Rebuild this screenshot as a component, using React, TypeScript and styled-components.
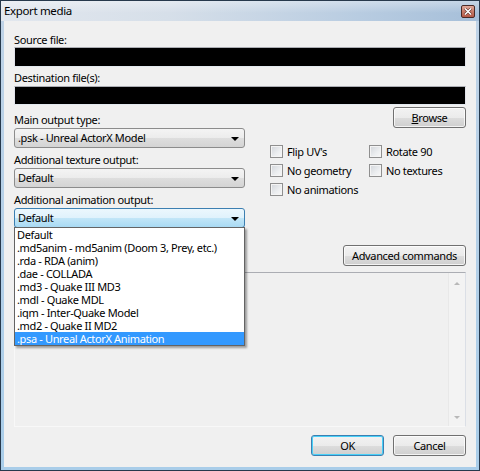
import React from 'react';
import styled, { createGlobalStyle, css } from 'styled-components';

const Global = createGlobalStyle`
  html, body { margin: 0; padding: 0; background: #ffffff; }
  body {
    font-family: "Noto Sans", "Open Sans", sans-serif;
    font-size: 11px;
    letter-spacing: -0.35px;
    color: #000;
  }
  * { box-sizing: border-box; }
`;

const Window = styled.div`
  width: 480px;
  height: 471px;
  display: flex;
  flex-direction: column;
  border: 1px solid #27394c;
  background: #bcd2e8;
`;

const TitleBar = styled.div`
  height: 20px;
  flex: none;
  display: flex;
  align-items: center;
  justify-content: space-between;
  padding: 0 4px 0 3px;
  background:
    linear-gradient(to bottom, rgba(255,255,255,0.35), rgba(255,255,255,0) 60%),
    linear-gradient(to right, #e2e7ee 0%, #d6dfe9 35%, #b8cce1 75%, #a6bfd9 100%);
`;

const Title = styled.span`
  font-size: 11.5px;
  line-height: 20px;
  color: #000;
`;

const CloseBtn = styled.div`
  width: 14px;
  height: 13px;
  border: 1px solid #4a2a26;
  border-radius: 2px;
  background: linear-gradient(to bottom, #e0aa9c 0%, #c77a68 50%, #b65a48 100%);
  display: flex;
  align-items: center;
  justify-content: center;
  margin-top: 1px;
`;

const Frame = styled.div`
  flex: 1;
  display: flex;
  padding: 0 3px 3px 3px;
  background: linear-gradient(to bottom, #bfd3e7, #a9cde9);
`;

const Client = styled.div`
  flex: 1;
  display: flex;
  flex-direction: column;
  background: #f0f0f0;
  padding: 12px 10px 11px 10px;
`;

const Label = styled.div<{ $mt?: number }>`
  line-height: 14px;
  height: 14px;
  margin-top: ${p => p.$mt ?? 0}px;
  white-space: nowrap;
`;

const TextBox = styled.div<{ $h: number; $mt?: number }>`
  height: ${p => p.$h}px;
  margin-top: ${p => p.$mt ?? 0}px;
  background: #000;
  border: 1px solid;
  border-color: #abadb3 #e2e3ea #e3e9ef #e2e3ea;
`;

const Columns = styled.div`
  display: flex;
  margin-top: 2px;
`;

const LeftCol = styled.div`
  width: 231px;
  flex: none;
  display: flex;
  flex-direction: column;
  padding-top: 6px;
`;

const RightCol = styled.div`
  flex: 1;
  display: flex;
  flex-direction: column;
  align-items: flex-end;
`;

const ComboWrap = styled.div`
  position: relative;
  margin-top: 1px;
`;

const Combo = styled.div<{ $focused?: boolean }>`
  height: 20px;
  display: flex;
  align-items: center;
  justify-content: space-between;
  padding: 0 5px 0 3px;
  border: 1px solid #8c8c8c;
  border-radius: 3px;
  line-height: 18px;
  background: linear-gradient(to bottom, #f4f4f4 0%, #ececec 50%, #dedede 51%, #d4d4d4 100%);
  ${p => p.$focused && css`
    border-color: #3c7fb1;
    background: linear-gradient(to bottom, #ecf7fd 0%, #dff2fc 50%, #c2e6f8 51%, #a9daf3 100%);
  `}
`;

const Arrow = styled.span`
  width: 0;
  height: 0;
  border-left: 4px solid transparent;
  border-right: 4px solid transparent;
  border-top: 4px solid #000;
  margin-top: 1px;
`;

const DropList = styled.ul`
  position: absolute;
  top: 19px;
  left: 0;
  width: 231px;
  margin: 0;
  padding: 0;
  list-style: none;
  background: #fff;
  border: 1px solid #646464;
  box-shadow: 2px 2px 2px rgba(0, 0, 0, 0.35);
  z-index: 5;
`;

const DropItem = styled.li<{ $selected?: boolean }>`
  height: 13px;
  line-height: 13px;
  padding-left: 2px;
  white-space: nowrap;
  overflow: hidden;
  background: ${p => (p.$selected ? '#3399ff' : 'transparent')};
  color: ${p => (p.$selected ? '#ffffff' : '#000000')};
`;

const Button = styled.div<{ $w: number; $default?: boolean; $mt?: number }>`
  width: ${p => p.$w}px;
  height: 21px;
  margin-top: ${p => p.$mt ?? 0}px;
  display: flex;
  align-items: center;
  justify-content: center;
  border: 1px solid #707070;
  border-radius: 3px;
  background: linear-gradient(to bottom, #f2f2f2 0%, #ebebeb 50%, #dddddd 51%, #cfcfcf 100%);
  box-shadow: inset 0 0 0 1px rgba(255, 255, 255, 0.75);
  ${p => p.$default && css`
    border-color: #3c7fb1;
    box-shadow: inset 0 0 0 1px #48d0f8;
  `}
`;

const CheckGrid = styled.div`
  align-self: stretch;
  margin: 14px 0 0 25px;
  display: grid;
  grid-template-columns: 99px auto;
  grid-auto-rows: 19px;
`;

const CheckItem = styled.label`
  display: flex;
  align-items: center;
  gap: 4px;
  white-space: nowrap;
`;

const CheckBox = styled.span`
  width: 13px;
  height: 13px;
  flex: none;
  border: 1px solid #8f8f8f;
  background: linear-gradient(135deg, #d2d5da 0%, #eceef0 60%, #f8f8f8 100%);
  box-shadow: inset 0 0 0 1px #f4f4f4;
`;

const Memo = styled.div`
  flex: 1;
  margin-top: 6px;
  display: flex;
  justify-content: flex-end;
  border: 1px solid;
  border-color: #abadb3 #dbdfe6 #f8f8f8 #f8f8f8;
  background: #f0f0f0;
`;

const ScrollBar = styled.div`
  width: 17px;
  display: flex;
  flex-direction: column;
  justify-content: space-between;
  align-items: center;
  padding: 9px 0 7px 0;
  background: #f3f3f3;
  border-left: 1px solid #e8e8e8;
`;

const ScrollArrow = styled.span<{ $up?: boolean }>`
  width: 0;
  height: 0;
  border-left: 3px solid transparent;
  border-right: 3px solid transparent;
  ${p => (p.$up ? 'border-bottom: 3px solid #b8b8b8;' : 'border-top: 3px solid #b8b8b8;')}
`;

const ButtonRow = styled.div`
  display: flex;
  justify-content: flex-end;
  gap: 9px;
  margin-top: 8px;
`;

const options = [
  'Default',
  '.md5anim - md5anim (Doom 3, Prey, etc.)',
  '.rda - RDA (anim)',
  '.dae - COLLADA',
  '.md3 - Quake III MD3',
  '.mdl - Quake MDL',
  '.iqm - Inter-Quake Model',
  '.md2 - Quake II MD2',
  '.psa - Unreal ActorX Animation',
];

const checks = ["Flip UV's", 'Rotate 90', 'No geometry', 'No textures', 'No animations'];

export default function App() {
  return (
    <>
      <Global />
      <Window>
        <TitleBar>
          <Title>Export media</Title>
          <CloseBtn>
            <svg width="8" height="7" viewBox="0 0 8 7">
              <path d="M1 0.5 L7 6.5 M7 0.5 L1 6.5" stroke="#5a2a22" strokeWidth="2.6" />
              <path d="M1 0.5 L7 6.5 M7 0.5 L1 6.5" stroke="#ffffff" strokeWidth="1.6" />
            </svg>
          </CloseBtn>
        </TitleBar>
        <Frame>
          <Client>
            <Label>Source file:</Label>
            <TextBox $h={20} />
            <Label $mt={4}>Destination file(s):</Label>
            <TextBox $h={19} $mt={1} />
            <Columns>
              <LeftCol>
                <Label>Main output type:</Label>
                <ComboWrap>
                  <Combo>
                    <span>.psk - Unreal ActorX Model</span>
                    <Arrow />
                  </Combo>
                </ComboWrap>
                <Label $mt={5}>Additional texture output:</Label>
                <ComboWrap>
                  <Combo>
                    <span>Default</span>
                    <Arrow />
                  </Combo>
                </ComboWrap>
                <Label $mt={5}>Additional animation output:</Label>
                <ComboWrap>
                  <Combo $focused>
                    <span>Default</span>
                    <Arrow />
                  </Combo>
                  <DropList>
                    {options.map((o, i) => (
                      <DropItem key={o} $selected={i === options.length - 1}>
                        {o}
                      </DropItem>
                    ))}
                  </DropList>
                </ComboWrap>
              </LeftCol>
              <RightCol>
                <Button $w={73}>
                  <span>
                    <u>B</u>rowse
                  </span>
                </Button>
                <CheckGrid>
                  {checks.map(c => (
                    <CheckItem key={c}>
                      <CheckBox />
                      <span>{c}</span>
                    </CheckItem>
                  ))}
                </CheckGrid>
                <Button $w={123} $mt={46}>
                  Advanced commands
                </Button>
              </RightCol>
            </Columns>
            <Memo>
              <ScrollBar>
                <ScrollArrow $up />
                <ScrollArrow />
              </ScrollBar>
            </Memo>
            <ButtonRow>
              <Button $w={73} $default>
                OK
              </Button>
              <Button $w={73}>Cancel</Button>
            </ButtonRow>
          </Client>
        </Frame>
      </Window>
    </>
  );
}
